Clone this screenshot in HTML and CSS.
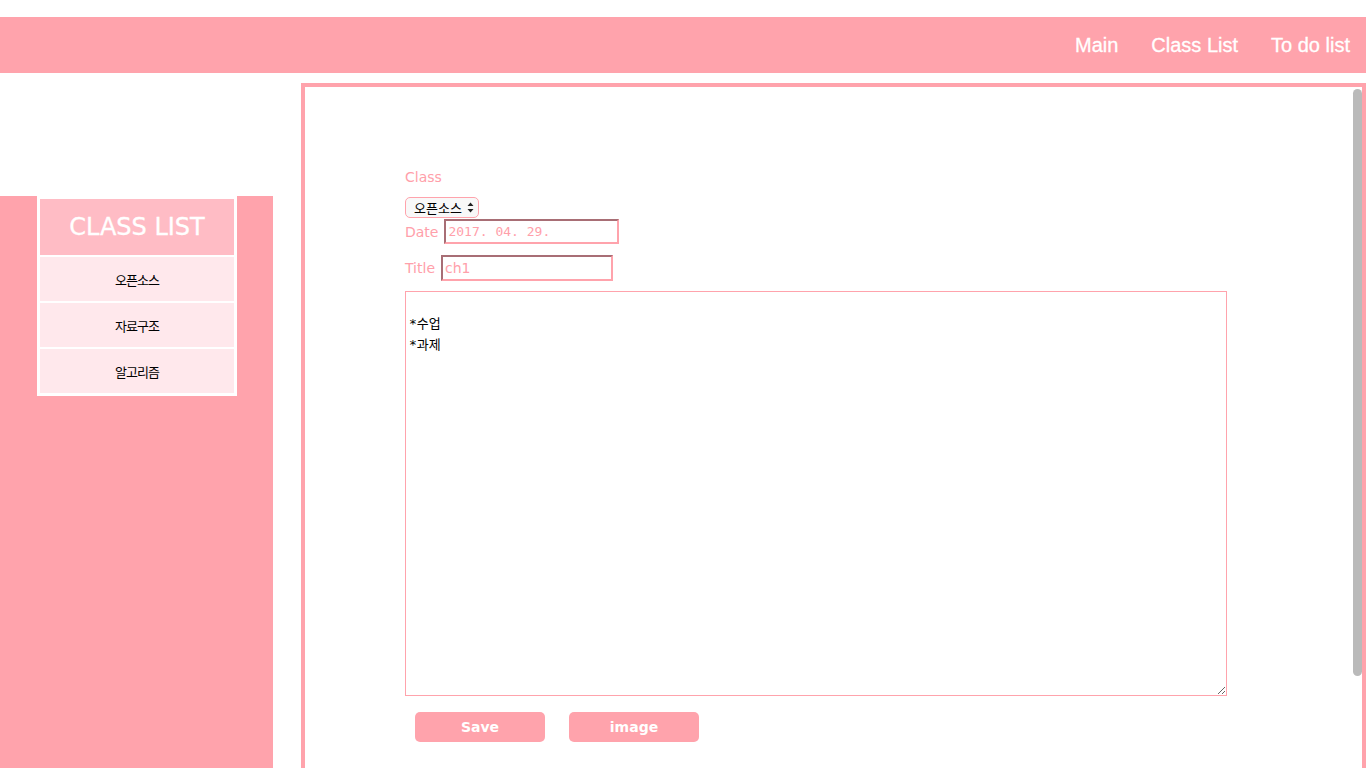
FILE: index.html
```html
<!DOCTYPE html>
<html lang="ko">
<head>
<meta charset="utf-8">
<title>Class Note</title>
<link rel="stylesheet" href="styles.css">
</head>
<body>
<header class="topbar">
  <nav class="nav">
    <a class="nav-link" href="#">Main</a>
    <a class="nav-link" href="#">Class List</a>
    <a class="nav-link" href="#">To do list</a>
  </nav>
</header>
<div class="page">
  <aside class="sidebar">
    <div class="class-box">
      <div class="class-title">CLASS LIST</div>
      <div class="class-item">오픈소스</div>
      <div class="class-item">자료구조</div>
      <div class="class-item">알고리즘</div>
    </div>
  </aside>
  <main class="frame">
    <form class="note-form">
      <div class="label-class">Class</div>
      <div class="select-wrap">
        <select class="class-select">
          <option>오픈소스</option>
          <option>자료구조</option>
          <option>알고리즘</option>
        </select>
        <svg class="select-arrows" width="7" height="11" viewBox="0 0 7 11"><path d="M3.5 0.5 L6.5 4 L0.5 4 Z M3.5 10.5 L6.5 7 L0.5 7 Z" fill="#222"/></svg>
      </div>
      <div class="row row-date">
        <label class="lbl">Date</label>
        <input class="field field-date" type="text" value="2017. 04. 29.">
      </div>
      <div class="row row-title">
        <label class="lbl">Title</label>
        <input class="field field-title" type="text" value="ch1">
      </div>
      <textarea class="note">

*수업
*과제</textarea>
      <div class="buttons">
        <button class="btn" type="button">Save</button>
        <button class="btn" type="button">image</button>
      </div>
    </form>
    <div class="scroll-thumb"></div>
  </main>
</div>
</body>
</html>
```

FILE: styles.css
```css
html, body {
  margin: 0;
  padding: 0;
  height: 100%;
  overflow: hidden;
  background: #ffffff;
}
body {
  font-family: "DejaVu Sans", Verdana, sans-serif;
}
.topbar {
  margin-top: 17px;
  height: 56px;
  background: #ffa3ac;
  display: flex;
  justify-content: flex-end;
  align-items: center;
}
.nav {
  display: flex;
  gap: 33px;
  padding-right: 16px;
}
.nav-link {
  font-family: "Liberation Sans", Arial, sans-serif;
  font-size: 20px;
  color: #ffffff;
  text-decoration: none;
  line-height: 24px;
  -webkit-text-stroke: 0.3px #ffffff;
}
.page {
  display: flex;
  align-items: flex-start;
  height: 695px;
}
.sidebar {
  width: 273px;
  margin-top: 123px;
  height: 600px;
  background: #ffa3ac;
  padding-left: 37px;
  box-sizing: border-box;
  flex-shrink: 0;
}
.class-box {
  width: 200px;
  background: #ffffff;
  padding: 3px;
  box-sizing: border-box;
  display: flex;
  flex-direction: column;
  gap: 2px;
}
.class-title {
  height: 56px;
  background: #ffbcc5;
  color: #ffffff;
  font-size: 24px;
  display: flex;
  align-items: center;
  justify-content: center;
  -webkit-text-stroke: 0.3px #ffffff;
}
.class-item {
  height: 44px;
  background: #ffe8ec;
  color: #000000;
  font-family: "Noto Sans CJK KR", sans-serif;
  font-size: 13px;
  letter-spacing: -1px;
  display: flex;
  align-items: center;
  justify-content: center;
}
.frame {
  position: relative;
  margin-left: 28px;
  margin-top: 10px;
  flex: 1;
  height: 720px;
  border: 4px solid #ffa3ac;
  background: #ffffff;
}
.note-form {
  padding-top: 82px;
  padding-left: 100px;
}
.label-class {
  color: #ffa0aa;
  font-size: 14px;
  line-height: 17px;
  height: 17px;
  margin-bottom: 11px;
}
.select-wrap {
  position: relative;
  width: 74px;
  height: 22px;
}
.class-select {
  display: block;
  appearance: none;
  -webkit-appearance: none;
  width: 74px;
  height: 21px;
  margin: 0;
  padding: 0 0 0 8px;
  border: 1px solid #ffa3ac;
  border-radius: 5px;
  background: #f8f8f8;
  font-family: "Noto Sans CJK KR", sans-serif;
  font-size: 13px;
  color: #000;
  box-sizing: border-box;
}
.select-arrows {
  position: absolute;
  right: 5px;
  top: 5px;
  pointer-events: none;
}
.row {
  display: flex;
  align-items: center;
  gap: 6px;
}
.row-date {
  height: 25px;
}
.row-title {
  margin-top: 11px;
  height: 26px;
  gap: 6px;
}
.lbl {
  color: #ffa0aa;
  font-size: 14px;
}
.field {
  box-sizing: border-box;
  margin: 0;
  padding: 0 2px;
  border: 2px solid;
  border-color: #a86e75 #ffa3ac #ffa3ac #a86e75;
  color: #ffa0aa;
  background: #fff;
  font-family: "DejaVu Sans Mono", monospace;
  font-size: 13px;
  outline: none;
}
.field-date {
  width: 175px;
  height: 25px;
}
.field-title {
  width: 172px;
  height: 26px;
  font-family: "DejaVu Sans", sans-serif;
  font-size: 14px;
}
.note {
  display: block;
  margin-top: 10px;
  width: 822px;
  height: 405px;
  box-sizing: border-box;
  border: 1px solid #ffa3ac;
  padding: 0 3px;
  font-family: "DejaVu Sans Mono", "Noto Sans CJK KR", monospace;
  font-size: 13px;
  line-height: 21px;
  color: #000;
  outline: none;
}
.buttons {
  display: flex;
  gap: 24px;
  margin-top: 16px;
  padding-left: 10px;
}
.btn {
  width: 130px;
  height: 30px;
  border: none;
  border-radius: 5px;
  background: #ffa3ac;
  color: #ffffff;
  font-family: "DejaVu Sans", sans-serif;
  font-weight: bold;
  font-size: 14px;
}
.scroll-thumb {
  position: absolute;
  right: 0;
  top: 2px;
  width: 9px;
  height: 587px;
  background: #bababa;
  border-radius: 5px;
}
```
